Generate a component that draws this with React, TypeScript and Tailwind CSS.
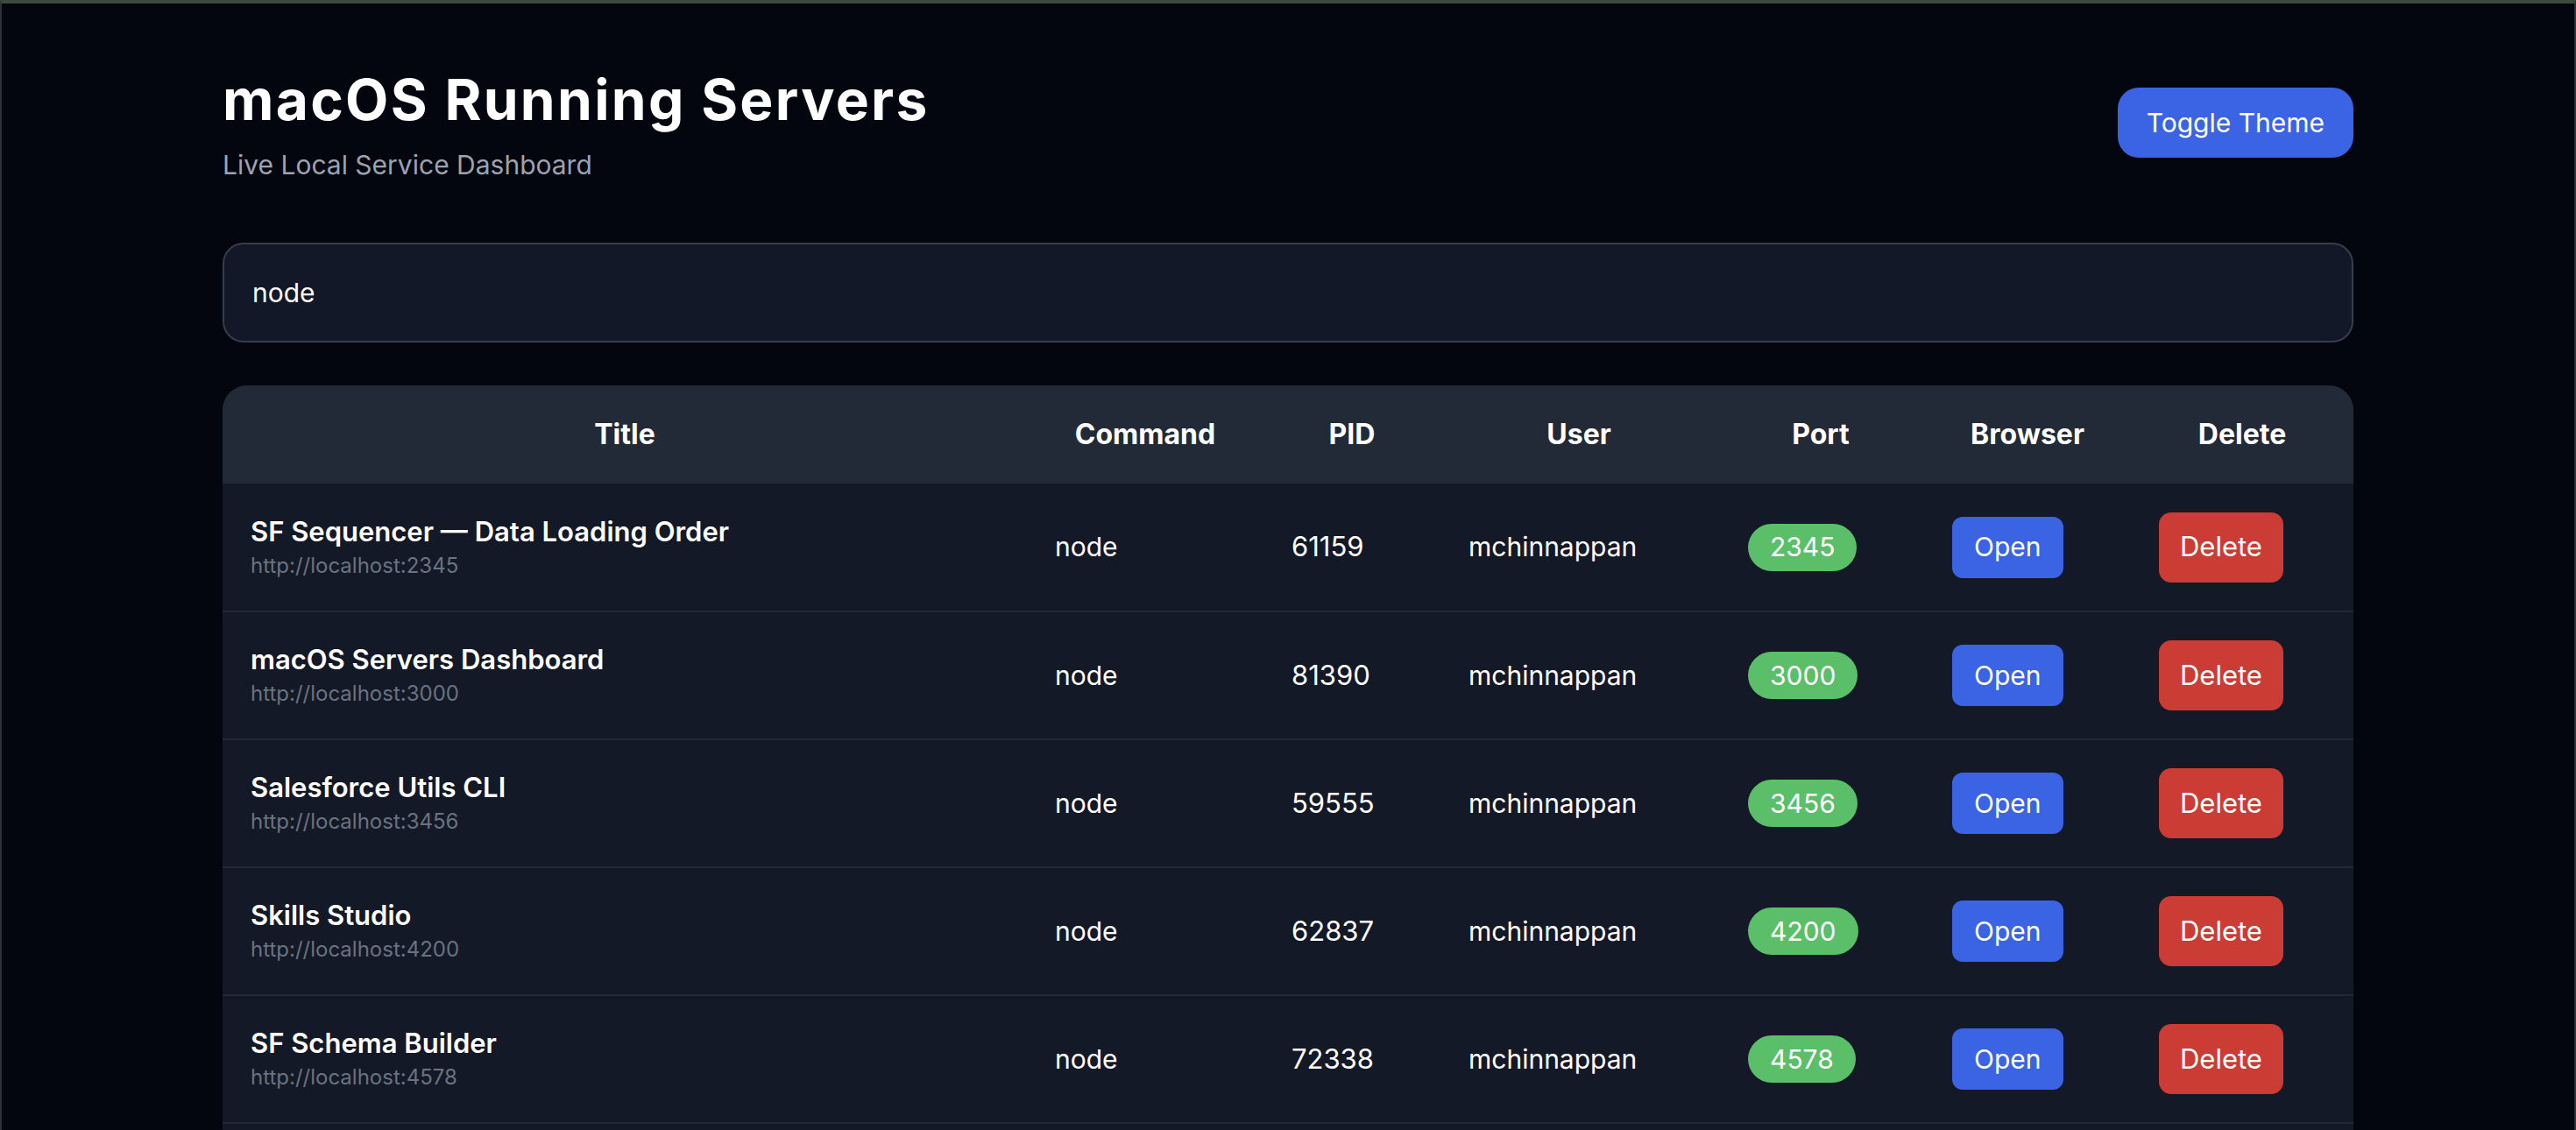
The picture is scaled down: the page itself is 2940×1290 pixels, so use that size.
import React from 'react';

type Server = {
  title: string;
  url: string;
  command: string;
  pid: number;
  user: string;
  port: number;
};

const SERVERS: Server[] = [
  { title: 'SF Sequencer — Data Loading Order', url: 'http://localhost:2345', command: 'node', pid: 61159, user: 'mchinnappan', port: 2345 },
  { title: 'macOS Servers Dashboard', url: 'http://localhost:3000', command: 'node', pid: 81390, user: 'mchinnappan', port: 3000 },
  { title: 'Salesforce Utils CLI', url: 'http://localhost:3456', command: 'node', pid: 59555, user: 'mchinnappan', port: 3456 },
  { title: 'Skills Studio', url: 'http://localhost:4200', command: 'node', pid: 62837, user: 'mchinnappan', port: 4200 },
  { title: 'SF Schema Builder', url: 'http://localhost:4578', command: 'node', pid: 72338, user: 'mchinnappan', port: 4578 },
];

const HEADERS = ['Title', 'Command', 'PID', 'User', 'Port', 'Browser', 'Delete'];

export default function App() {
  return (
    <div className="min-h-screen bg-[#03060f] border-t-[4px] border-t-[#3c4a3c] border-x-2 border-x-[#2f3337] font-['Inter',_'Noto_Sans',_sans-serif] text-white">
      <div className="max-w-[2560px] mx-auto px-[64px] pt-[78px]">
        {/* Header */}
        <div className="flex items-start justify-between">
          <div>
            <h1 className="text-[64px] leading-[64px] font-bold tracking-[2.3px]">macOS Running Servers</h1>
            <p className="mt-[22px] text-[30px] leading-[40px] text-[#9ca3af]">Live Local Service Dashboard</p>
          </div>
          <button className="mt-[18px] h-[80px] px-[33px] rounded-[24px] bg-[#3a64e3] text-[30px] leading-[48px] text-white">
            Toggle Theme
          </button>
        </div>

        {/* Search */}
        <input
          defaultValue="node"
          className="mt-[69px] block w-full h-[114px] px-[32px] rounded-[24px] border-2 border-[#363d4b] bg-[#121827] text-[30px] text-white outline-none"
        />

        {/* Table */}
        <div className="mt-[49px] rounded-[28px] overflow-hidden bg-[#131926] pb-[40px]">
          <table className="w-full table-fixed border-collapse">
            <colgroup>
              <col className="w-[918px]" />
              <col className="w-[270px]" />
              <col className="w-[202px]" />
              <col className="w-[316px]" />
              <col className="w-[236px]" />
              <col className="w-[236px]" />
              <col className="w-[254px]" />
            </colgroup>
            <thead>
              <tr className="bg-[#222937] h-[112px]">
                {HEADERS.map((h) => (
                  <th key={h} className="px-[32px] text-center text-[32px] font-bold">
                    {h}
                  </th>
                ))}
              </tr>
            </thead>
            <tbody>
              {SERVERS.map((s) => (
                <tr key={s.pid} className="h-[146px] border-b-2 border-[#222938]">
                  <td className="px-[32px]">
                    <div className="text-[31px] leading-[38px] font-semibold">{s.title}</div>
                    <div className="mt-[4px] text-[24px] leading-[32px] text-[#6b7280]">{s.url}</div>
                  </td>
                  <td className="px-[32px] text-[30px]">{s.command}</td>
                  <td className="px-[32px] text-[31px]">{s.pid}</td>
                  <td className="px-[32px] text-[30px]">{s.user}</td>
                  <td className="pl-[35px] pr-[32px]">
                    <span className="inline-flex items-center h-[54px] px-[25px] rounded-full bg-[#5bbf6a] text-[30px]">
                      {s.port}
                    </span>
                  </td>
                  <td className="px-[32px]">
                    <button className="h-[70px] px-[25px] rounded-[12px] bg-[#3a64e3] text-[30px]">Open</button>
                  </td>
                  <td className="px-[32px]">
                    <button className="h-[80px] px-[24px] rounded-[14px] bg-[#cb3c34] text-[31px]">Delete</button>
                  </td>
                </tr>
              ))}
            </tbody>
          </table>
        </div>
      </div>
    </div>
  );
}
